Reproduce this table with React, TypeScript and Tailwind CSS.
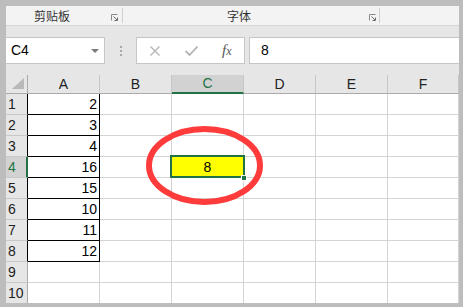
import React from "react";

const cols = ["A", "B", "C", "D", "E", "F"];
const values: Record<number, number> = { 1: 2, 2: 3, 3: 4, 4: 16, 5: 15, 6: 10, 7: 11, 8: 12 };
const rows = [1, 2, 3, 4, 5, 6, 7, 8, 9, 10];

const font = { fontFamily: '"Liberation Sans", Arial, sans-serif' };
const cjk = { fontFamily: '"Noto Sans CJK SC", "Noto Sans", sans-serif' };

function Launcher() {
  return (
    <svg width="7" height="7" viewBox="0 0 7 7" className="block">
      <path d="M0.5 6.5 V0.5 H6.5" stroke="#8a8a8a" strokeWidth="1" fill="none" />
      <path d="M2.5 2.5 L6 6" stroke="#6a6a6a" strokeWidth="1" fill="none" />
      <path d="M3.5 6.5 H6.5 V3.5" stroke="#6a6a6a" strokeWidth="1" fill="none" />
    </svg>
  );
}

function RowHeader({ r }: { r: number }) {
  const edge = r === 4 ? "border-r-2 border-r-[#217346]" : r <= 8 ? "border-r border-r-black" : "border-r border-r-[#ababab]";
  const bg = r === 4 ? "bg-[#d2d2d2] text-[#217346]" : "bg-[#e6e6e6] text-[#222]";
  return (
    <div className={`flex items-center pl-[2px] text-[14px] border-b border-b-[#c8c8c8] ${edge} ${bg}`}>
      {r}
    </div>
  );
}

function Cell({ r, c }: { r: number; c: string }) {
  if (c === "A" && r <= 8) {
    return (
      <div className="flex items-center justify-end pr-[2px] text-[14px] text-black border-r border-b border-black">
        {values[r]}
      </div>
    );
  }
  if (c === "C" && r === 4) {
    return (
      <div className="relative flex items-center justify-center text-[14px] text-black bg-[#ffff00] border-r border-b border-[#d4d4d4]">
        8
        <div className="absolute left-[-2px] top-[-2px] w-[75px] h-[23px] border-2 border-[#217346]" />
        <div className="absolute left-[69px] top-[18px] w-[6px] h-[6px] bg-[#217346] border border-white" />
      </div>
    );
  }
  return <div className="border-r border-b border-[#d4d4d4]" />;
}

export default function App() {
  return (
    <div className="relative w-[463px] h-[307px] bg-[#bdbdbd] pt-[6px] pl-[6px] pr-[4px] pb-[4px] overflow-hidden" style={font}>
      <div className="flex flex-col w-full h-full bg-white overflow-hidden">
        {/* ribbon group labels */}
        <div className="flex items-center h-[20px] shrink-0 bg-[#f3f3f3] border-b border-[#d5d5d5]">
          <div className="w-[92px] text-center text-[12px] leading-none text-[#333]" style={cjk}>剪贴板</div>
          <div className="ml-[13px] mt-[3px]"><Launcher /></div>
          <div className="ml-[4px] w-px h-[15px] bg-[#d0d0d0]" />
          <div className="w-[232px] text-center text-[12px] leading-none text-[#333]" style={cjk}>字体</div>
          <div className="ml-[14px] mt-[3px]"><Launcher /></div>
          <div className="ml-[3px] w-px h-[15px] bg-[#d0d0d0]" />
        </div>

        {/* name box + formula bar */}
        <div className="h-[49px] shrink-0 bg-[#e6e6e6] pt-[11px]">
          <div className="flex h-[27px]">
            <div className="flex items-center w-[99px] bg-white border border-l-0 border-[#c6c6c6] pl-[5px] pr-[5px]">
              <span className="text-[14px] text-black">C4</span>
              <svg width="8" height="4" viewBox="0 0 8 4" className="ml-auto">
                <path d="M0 0 H8 L4 4 Z" fill="#7a7a7a" />
              </svg>
            </div>
            <div className="flex flex-col items-center justify-center gap-[2px] w-[31px]">
              <span className="w-[2px] h-[2px] bg-[#a8a8a8]" />
              <span className="w-[2px] h-[2px] bg-[#a8a8a8]" />
              <span className="w-[2px] h-[2px] bg-[#a8a8a8]" />
            </div>
            <div className="flex items-center w-[109px] bg-white border border-[#c6c6c6]">
              <svg width="10" height="10" viewBox="0 0 10 10" className="ml-[13px]">
                <path d="M0.5 0.5 L9.5 9.5 M9.5 0.5 L0.5 9.5" stroke="#b4b4b4" strokeWidth="1.3" />
              </svg>
              <svg width="13" height="10" viewBox="0 0 13 10" className="ml-[25px]">
                <path d="M0.5 5 L4.5 9 L12.5 0.5" stroke="#b4b4b4" strokeWidth="1.8" fill="none" />
              </svg>
              <span
                className="ml-[24px] text-[15px] italic text-[#555] leading-none"
                style={{ fontFamily: '"Liberation Serif", "Times New Roman", serif' }}
              >
                f<span className="text-[12px]">x</span>
              </span>
            </div>
            <div className="flex items-center flex-1 ml-[4px] bg-white border border-r-0 border-[#c6c6c6] pl-[11px]">
              <span className="text-[14px] text-black">8</span>
            </div>
          </div>
        </div>

        {/* worksheet grid */}
        <div className="grid grid-cols-[22px_72px_72px_72px_72px_72px_71px] grid-rows-[19px_repeat(10,21px)]">
          <div className="relative bg-[#e6e6e6] border-r border-b border-[#ababab]">
            <svg width="12" height="11" viewBox="0 0 12 11" className="absolute left-[6px] top-[3px]">
              <path d="M12 0 V11 H0 Z" fill="#b9b9b9" />
            </svg>
          </div>
          {cols.map((c) =>
            c === "C" ? (
              <div
                key={c}
                className="flex items-center justify-center text-[14px] text-[#217346] bg-[#d2d2d2] border-r border-r-[#c6c6c6] border-b-2 border-b-[#217346]"
              >
                {c}
              </div>
            ) : (
              <div
                key={c}
                className="flex items-center justify-center text-[14px] text-[#222] bg-[#e6e6e6] border-r border-r-[#c6c6c6] border-b border-b-[#ababab]"
              >
                {c}
              </div>
            )
          )}
          {rows.map((r) => (
            <React.Fragment key={r}>
              <RowHeader r={r} />
              {cols.map((c) => (
                <Cell key={c} r={r} c={c} />
              ))}
            </React.Fragment>
          ))}
        </div>
      </div>

      {/* hand-drawn highlight around C4 */}
      <svg width="463" height="307" className="absolute left-0 top-0 pointer-events-none">
        <ellipse cx="204.5" cy="165.5" rx="55.5" ry="36.5" fill="none" stroke="#ff3b3b" strokeWidth="6" />
      </svg>
    </div>
  );
}
